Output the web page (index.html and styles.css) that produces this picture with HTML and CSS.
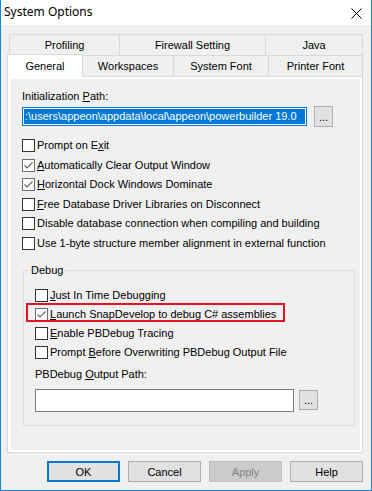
FILE: index.html
```html
<!DOCTYPE html>
<html lang="en">
<head>
    <meta charset="UTF-8">
    <title>System Options</title>
    <link rel="stylesheet" href="styles.css">
</head>
<body>
    <div class="window">
        <!-- title bar -->
        <div class="titlebar">
            <span class="title">System Options</span>
            <svg class="close" width="11" height="11" viewBox="0 0 11 11">
                <path d="M0.5 0.5 L10.5 10.5 M10.5 0.5 L0.5 10.5" stroke="#000" stroke-width="1" fill="none"/>
            </svg>
        </div>

        <div class="main">
            <!-- tabs, two rows -->
            <div class="tabs">
                <div class="tab-row back">
                    <div class="tab t-profiling">Profiling</div>
                    <div class="tab t-firewall">Firewall Setting</div>
                    <div class="tab t-java">Java</div>
                </div>
                <div class="tab-row front">
                    <div class="tab t-general">General</div>
                    <div class="tab t-workspaces">Workspaces</div>
                    <div class="tab t-sysfont">System Font</div>
                    <div class="tab t-printfont">Printer Font</div>
                </div>
            </div>

            <div class="page">
                <div class="page-inner">
                    <div class="label">Initialization <u>P</u>ath:</div>
                    <div class="path-row">
                        <div class="path-field"><div class="sel">:\users\appeon\appdata\local\appeon\powerbuilder 19.0</div></div>
                        <button class="browse">...</button>
                    </div>

                    <div class="checks">
                        <div class="check"><span class="box"></span><span class="check-text">Prompt on E<u>x</u>it</span></div>
                        <div class="check"><span class="box on"><svg width="11" height="11" viewBox="0 0 11 11"><polyline points="1.5,5.5 4,8 9.5,2.5" stroke="#666" stroke-width="1.2" fill="none"/></svg></span><span class="check-text"><u>A</u>utomatically Clear Output Window</span></div>
                        <div class="check"><span class="box on"><svg width="11" height="11" viewBox="0 0 11 11"><polyline points="1.5,5.5 4,8 9.5,2.5" stroke="#666" stroke-width="1.2" fill="none"/></svg></span><span class="check-text"><u>H</u>orizontal Dock Windows Dominate</span></div>
                        <div class="check"><span class="box"></span><span class="check-text"><u>F</u>ree Database Driver Libraries on Disconnect</span></div>
                        <div class="check"><span class="box"></span><span class="check-text">Disable database connection when compiling and building</span></div>
                        <div class="check"><span class="box"></span><span class="check-text">Use 1-byte structure member alignment in external function</span></div>
                    </div>

                    <fieldset class="debug">
                        <legend>Debug</legend>
                        <div class="debug-body">
                            <div class="checks tight">
                                <div class="check"><span class="box"></span><span class="check-text"><u>J</u>ust In Time Debugging</span></div>
                                <div class="check marked"><span class="box on"><svg width="11" height="11" viewBox="0 0 11 11"><polyline points="1.5,5.5 4,8 9.5,2.5" stroke="#666" stroke-width="1.2" fill="none"/></svg></span><span class="check-text"><u>L</u>aunch SnapDevelop to debug C# assemblies</span></div>
                                <div class="check"><span class="box"></span><span class="check-text"><u>E</u>nable PBDebug Tracing</span></div>
                                <div class="check"><span class="box"></span><span class="check-text">Prompt <u>B</u>efore Overwriting PBDebug Output File</span></div>
                            </div>
                            <div class="label out-label">PBDebug <u>O</u>utput Path:</div>
                            <div class="out-row">
                                <div class="out-field"></div>
                                <button class="browse small">...</button>
                            </div>
                        </div>
                    </fieldset>
                </div>
            </div>

            <div class="buttons">
                <button class="btn default">OK</button>
                <button class="btn">Cancel</button>
                <button class="btn disabled">Apply</button>
                <button class="btn">Help</button>
            </div>
        </div>
    </div>
</body>
</html>
```

FILE: styles.css
```css
body {
    margin: 0;
    font-family: "Liberation Sans", Arial, sans-serif;
    font-size: 11px;
    color: #000;
    background: #fff;
}

.window {
    width: 372px;
    height: 491px;
    box-sizing: border-box;
    border: 1px solid #1883d7;
    border-top: none;
    background: #f0f0f0;
}

/* title bar */
.titlebar {
    height: 25px;
    box-sizing: border-box;
    background: #fff;
    display: flex;
    justify-content: space-between;
    align-items: flex-start;
    padding: 4px 9px 0 3px;
}

.title {
    font-family: "Noto Sans", "Liberation Sans", sans-serif;
    font-size: 12px;
    line-height: 16px;
}

.close {
    margin-top: 4px;
}

.main {
    padding: 0 8px 0 6px;
}

/* tabs */
.tabs {
    margin-top: 9px;
}

.tab-row {
    display: flex;
}

.tab-row.back {
    margin-left: 2px;
}

.tab-row.front {
    margin-top: -2px;
    margin-bottom: -1px;
    align-items: flex-end;
    position: relative;
    z-index: 1;
}

.tab {
    box-sizing: border-box;
    height: 22px;
    border: 1px solid #d9d9d9;
    background: #f0f0f0;
    display: flex;
    align-items: center;
    justify-content: center;
    white-space: nowrap;
}

.tab + .tab {
    margin-left: -1px;
}

.t-profiling { width: 111px; }
.t-firewall { width: 147px; }
.t-java { width: 98px; }

.t-general {
    width: 76px;
    height: 23px;
    background: #fff;
    border-bottom: none;
}
.t-workspaces { width: 92px; }
.t-sysfont { width: 96px; }
.t-printfont { width: 95px; }

/* tab page */
.page {
    height: 377px;
    box-sizing: border-box;
    border: 1px solid #d9d9d9;
    background: #fff;
    padding: 2px 2px 2px 3px;
}

.page-inner {
    height: 100%;
    box-sizing: border-box;
    background: #f0f0f0;
    padding: 11px 0 0 11px;
}

.label {
    line-height: 13px;
}

.path-row {
    display: flex;
    align-items: center;
    margin-top: 3px;
}

.path-field {
    width: 285px;
    height: 19px;
    box-sizing: border-box;
    border: 1px solid #0078d7;
    background: #fff;
    padding: 1px;
}

.sel {
    height: 15px;
    line-height: 15px;
    padding-left: 1px;
    background: #0078d7;
    color: #fff;
    white-space: nowrap;
    overflow: hidden;
}

.browse {
    width: 19px;
    height: 21px;
    box-sizing: border-box;
    margin-left: 7px;
    padding: 0;
    border: 1px solid #adadad;
    background: #e1e1e1;
    font-family: inherit;
    font-size: 11px;
    color: #000;
}

.browse.small {
    height: 20px;
    margin-left: 5px;
}

/* checkboxes */
.checks {
    margin-top: 12px;
    display: flex;
    flex-direction: column;
    gap: 6.6px;
}

.checks.tight {
    margin-top: 0;
    gap: 6px;
}

.check {
    display: flex;
    align-items: center;
    height: 13px;
}

.box {
    width: 13px;
    height: 13px;
    box-sizing: border-box;
    border: 1px solid #333;
    background: #fff;
    flex: none;
}

.box svg {
    display: block;
}

.box.on {
    border-color: #6d6d6d;
}

.check-text {
    margin-left: 2px;
    line-height: 13px;
    white-space: nowrap;
}

.check.marked {
    position: relative;
}

.check.marked::after {
    content: "";
    position: absolute;
    left: -9px;
    top: -5px;
    width: 259px;
    height: 19px;
    box-sizing: border-box;
    border: 2px solid #e81123;
}

/* debug group */
.debug {
    margin: 14px 5px 0 1px;
    padding: 12px 0 13px 0;
    border: 1px solid #dcdcdc;
    min-width: 0;
}

.debug legend {
    margin-left: 5px;
    padding: 0 2px;
    line-height: 13px;
}

.debug-body {
    padding-left: 11px;
}

.out-label {
    margin-top: 9px;
}

.out-row {
    display: flex;
    align-items: center;
    margin-top: 8px;
}

.out-field {
    width: 259px;
    height: 23px;
    box-sizing: border-box;
    border: 1px solid #7a7a7a;
    background: #fff;
}

/* dialog buttons */
.buttons {
    display: flex;
    justify-content: flex-end;
    gap: 8px;
    margin-top: 8px;
}

.btn {
    width: 73px;
    height: 21px;
    box-sizing: border-box;
    padding: 0;
    border: 1px solid #adadad;
    background: #e1e1e1;
    font-family: inherit;
    font-size: 11px;
    color: #000;
}

.btn.default {
    border: 2px solid #0078d7;
}

.btn.disabled {
    background: #cccccc;
    border-color: #bfbfbf;
    color: #838383;
}
```
